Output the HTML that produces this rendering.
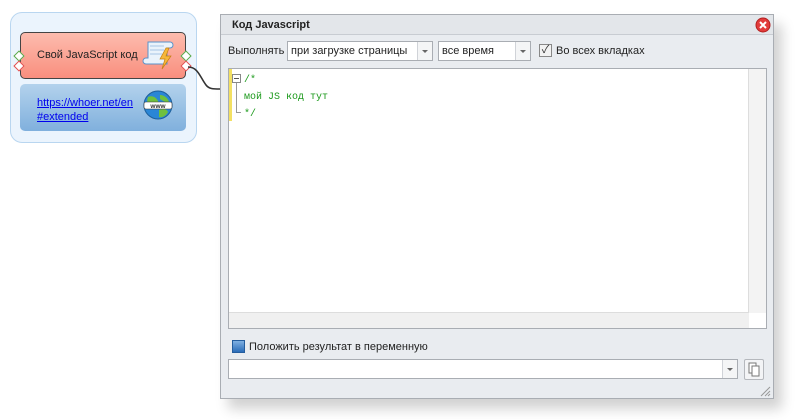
<!DOCTYPE html>
<html><head><meta charset="utf-8"><style>
*{box-sizing:border-box;margin:0;padding:0}
body{width:797px;height:420px;background:#fff;position:relative;overflow:hidden;font-family:"Liberation Sans","Noto Sans CJK SC",sans-serif;font-size:11px;color:#222}
.abs{position:absolute}
.grp{left:10px;top:12px;width:187px;height:131px;background:#ebf4fd;border:1px solid #b9d6f0;border-radius:12px}
.red{left:20px;top:32px;width:166px;height:47px;background:linear-gradient(#fdbcae,#f98e7e);border:1px solid #444;border-radius:5px}
.blue{left:20px;top:84px;width:166px;height:47px;background:linear-gradient(#b3d2ec,#80b0dd);border-radius:5px}
.dia{left:220px;top:14px;width:554px;height:385px;background:#e9ecf0;border:1px solid #a9adb3;box-shadow:8px 10px 12px rgba(0,0,0,.18)}
.title{left:0;top:0;width:552px;height:20px;background:#e3e6ea;border-bottom:1px solid #c8ccd2;font-weight:bold;font-size:11px;padding:4px 0 0 11px}
.sel{background:#fff;border:1px solid #a9adb3;height:20px;font-size:11px;padding:3px 0 0 3px}
.arr{position:absolute;right:0;top:0;width:15px;height:18px;border-left:1px solid #d0d3d8;background:#f4f5f6}
.arr:after{content:"";position:absolute;left:4px;top:8px;border:3px solid transparent;border-top:3px solid #666}
.code{font-family:"Liberation Mono",monospace;font-size:10px;color:#1c9a1c}
</style></head><body>
<div class="abs grp"></div>
<div class="abs red"></div>
<div class="abs" style="left:37px;top:49px;font-size:11px;color:#222">Свой JavaScript код</div>
<svg class="abs" style="left:142px;top:38px" width="36" height="34" viewBox="0 0 36 34">
<path d="M6 4h22a3 3 0 0 1 0 6h-3v16H4a3 3 0 0 1 0-6h2z" fill="#eaf3fb" stroke="#5a93c9"/>
<path d="M8 8h14M8 12h14M8 16h12" stroke="#a7c6e4"/>
<path d="M24 10l-6 11h5l-3 10 9-13h-5l3-8z" fill="#f6b73b" stroke="#c47f10" stroke-width=".7"/>
</svg>
<div class="abs" style="left:15px;top:52px;width:8px;height:8px;background:#fff;border:1.5px solid #58a848;transform:rotate(45deg)"></div>
<div class="abs" style="left:15px;top:62px;width:8px;height:8px;background:#fff;border:1.5px solid #e24c4c;transform:rotate(45deg)"></div>
<div class="abs" style="left:182px;top:52px;width:8px;height:8px;background:#fff;border:1.5px solid #58a848;transform:rotate(45deg)"></div>
<div class="abs" style="left:182px;top:62px;width:8px;height:8px;background:#fff;border:1.5px solid #e24c4c;transform:rotate(45deg)"></div>
<svg class="abs" style="left:186px;top:64px" width="36" height="30"><path d="M2 3c10 0 12 10 18 18 3 4 7 4 14 4" fill="none" stroke="#333" stroke-width="1.6"/></svg>
<div class="abs blue"></div>
<div class="abs" style="left:37px;top:96px;font-size:11px;line-height:14px;color:#0000ee;text-decoration:underline">https://whoer.net/en<br>#extended</div>
<svg class="abs" style="left:142px;top:89px" width="32" height="32" viewBox="0 0 32 32">
<circle cx="16" cy="16" r="14" fill="#2a86d6" stroke="#1d5f9b"/>
<path d="M6 8c4-2 8 0 10 4s-2 6-6 5-6-4-4-9zM18 6c4 0 8 3 9 7-3 1-6-1-9-3zM17 21c4-2 8-1 9 2-2 4-6 6-9 5z" fill="#6fc03e"/>
<rect x="2" y="13" width="28" height="7" rx="2" fill="#fff" stroke="#333" stroke-width=".6"/>
<text x="16" y="19" font-size="6.5" text-anchor="middle" font-family="Liberation Sans" font-weight="bold" fill="#333">www</text>
</svg>

<div class="abs dia">
<div class="abs title">Код Javascript</div>
<svg class="abs" style="left:534px;top:2px" width="16" height="16"><circle cx="8" cy="8" r="7" fill="#e23b3b" stroke="#b32020"/><path d="M5 5l6 6M11 5l-6 6" stroke="#fff" stroke-width="2"/></svg>
<div class="abs" style="left:7px;top:30px">Выполнять</div>
<div class="abs sel" style="left:66px;top:26px;width:146px">при загрузке страницы<div class="arr"></div></div>
<div class="abs sel" style="left:217px;top:26px;width:93px">все время<div class="arr"></div></div>
<div class="abs" style="left:318px;top:29px;width:13px;height:13px;border:1px solid #888;background:#f2f2f2;font-size:11px;line-height:11px;text-align:center;color:#333">✓</div>
<div class="abs" style="left:335px;top:30px">Во всех вкладках</div>
<div class="abs" style="left:7px;top:53px;width:539px;height:261px;background:#fff;border:1px solid #a9adb3">
 <div class="abs" style="left:0;top:0;width:3px;height:52px;background:#f3e063"></div>
 <div class="abs" style="left:3px;top:5px;width:9px;height:9px;border:1px solid #888;background:#fff"><div style="margin:3px 1px;height:1px;background:#555"></div></div>
 <div class="abs" style="left:7px;top:14px;width:1px;height:29px;background:#999"></div>
 <div class="abs" style="left:7px;top:43px;width:5px;height:1px;background:#999"></div>
 <div class="abs code" style="left:15px;top:3px;line-height:17px">/*<br>мой JS код тут<br>*/</div>
 <div class="abs" style="right:0;top:0;width:18px;height:244px;background:#f3f3f3;border-left:1px solid #ddd"></div>
 <div class="abs" style="left:0;bottom:0;width:520px;height:16px;background:#f0f0f0;border-top:1px solid #ddd"></div>
</div>
<div class="abs" style="left:11px;top:325px;width:13px;height:13px;background:linear-gradient(#7fb0e2,#2a6cb8);border:1px solid #245d9e"></div>
<div class="abs" style="left:28px;top:326px">Положить результат в переменную</div>
<div class="abs sel" style="left:7px;top:344px;width:510px;height:20px"><div class="arr"></div></div>
<div class="abs" style="left:523px;top:344px;width:20px;height:21px;border:1px solid #b5b8bd;border-radius:2px;background:#f3f4f6">
<svg width="18" height="18"><rect x="4" y="3" width="7" height="10" fill="#fff" stroke="#777"/><rect x="7" y="6" width="7" height="10" fill="#fff" stroke="#777"/></svg></div>
<svg class="abs" style="left:538px;top:370px" width="12" height="12"><path d="M11 2L2 11M11 6L6 11M11 9L9 11" stroke="#999"/></svg>
</div>
</body></html>
